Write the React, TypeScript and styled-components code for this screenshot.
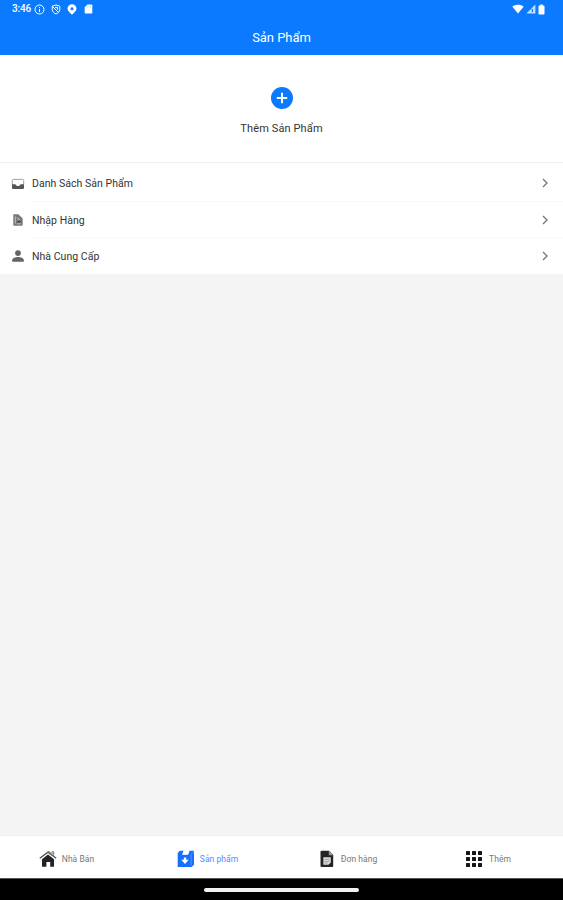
import React from "react";
import styled, { createGlobalStyle } from "styled-components";

const GlobalStyle = createGlobalStyle`
  * { box-sizing: border-box; }
  body { margin: 0; font-family: Roboto, "Noto Sans", sans-serif; background: #f4f4f4; }
  svg { display: block; flex: none; }
`;

const Screen = styled.div`
  height: 900px;
  width: 100%;
  display: flex;
  flex-direction: column;
  overflow: hidden;
  background: #f4f4f4;
`;

const Header = styled.header`
  height: 55px;
  background: #0b7aff;
  color: #fff;
`;

const StatusBar = styled.div`
  height: 18px;
  padding: 0 18px 0 12px;
  display: flex;
  align-items: center;
  justify-content: space-between;
`;

const StatusGroup = styled.div<{ $gap: number }>`
  display: flex;
  align-items: center;
  gap: ${(p) => p.$gap}px;
`;

const Clock = styled.span`
  width: 16px;
  font-size: 10px;
  font-weight: 500;
  line-height: 18px;
  letter-spacing: -0.15px;
  white-space: nowrap;
`;

const Title = styled.h1`
  margin: 0;
  height: 37px;
  line-height: 39px;
  text-align: center;
  font-size: 13px;
  font-weight: 400;
  letter-spacing: -0.05px;
`;

const AddPanel = styled.button`
  height: 107px;
  padding: 32px 0 0;
  border: 0;
  background: #fff;
  display: flex;
  flex-direction: column;
  align-items: center;
  gap: 12px;
  font: 400 11px/16px Roboto, sans-serif;
  letter-spacing: 0.12px;
  color: #333;
`;

const Menu = styled.nav`
  height: 112px;
  padding-top: 2px;
  border-top: 1px solid #efefef;
  background: #fff;
  display: grid;
  grid-template-rows: 37px 36px 36px;
`;

const MenuRow = styled.a`
  display: flex;
  align-items: center;
  padding-left: 11px;
  color: #666;
`;

const MenuBody = styled.span<{ $last?: boolean }>`
  flex: 1;
  align-self: stretch;
  margin-left: 7px;
  padding-right: 12px;
  border-bottom: 1px solid ${(p) => (p.$last ? "transparent" : "#f9f9f9")};
  display: flex;
  align-items: center;
  justify-content: space-between;
`;

const MenuLabel = styled.span`
  padding-top: 1px;
  font-size: 10.5px;
  letter-spacing: 0.04px;
  color: #333;
`;

const Content = styled.main`
  flex: 1;
`;

const TabBar = styled.nav`
  height: 43px;
  padding: 3px 2px 0 0;
  border-top: 1px solid #eee;
  background: #fff;
  display: grid;
  grid-template-columns: 133px 149px 133px 1fr;
`;

const Tab = styled.a<{ $active?: boolean; $gap: number }>`
  display: flex;
  align-items: center;
  justify-content: center;
  gap: ${(p) => p.$gap}px;
  color: ${(p) => (p.$active ? "#176fff" : "#222")};
`;

const TabLabel = styled.span<{ $active?: boolean }>`
  font-size: 8.5px;
  line-height: 12px;
  white-space: nowrap;
  letter-spacing: 0.05px;
  color: ${(p) => (p.$active ? "#4e8dff" : "#777")};
`;

const SystemBar = styled.footer`
  height: 22px;
  background: #000;
  border-top: 1px solid #555;
  display: flex;
  align-items: center;
  justify-content: center;
`;

const HomeHandle = styled.span`
  width: 155px;
  height: 4px;
  border-radius: 2px;
  background: #f2f2f2;
`;

const InfoIcon = () => (
  <svg width="11" height="11" viewBox="0 0 11 11" fill="none" stroke="#fff">
    <circle cx="5.5" cy="5.5" r="4.5" />
    <path d="M5.5 3v1M5.5 5v3.2" />
  </svg>
);
const ShieldIcon = () => (
  <svg width="10" height="11" viewBox="0 0 10 11" fill="none" stroke="#fff">
    <path d="M1.2 2.2 5 .9l3.8 1.3v3C8.8 7.6 7 9.2 5 10 3 9.2 1.2 7.6 1.2 5.2zM1.5 2.5l6 6M4 3.3h2.5v2.4" />
  </svg>
);
const PinIcon = () => (
  <svg width="10" height="11" viewBox="0 0 10 11" fill="#fff" fillRule="evenodd">
    <path d="M5 .2A4.5 4.5 0 0 0 .5 4.6C.5 7.1 3 8.7 5 10.8c2-2.1 4.5-3.7 4.5-6.2A4.5 4.5 0 0 0 5 .2zm0 3a1.5 1.5 0 1 1 0 3 1.5 1.5 0 0 1 0-3z" />
  </svg>
);
const CardIcon = () => (
  <svg width="10" height="10" viewBox="-1 0 10 10">
    <path d="M3.5.5h4a.8.8 0 0 1 .8.8v7.4a.8.8 0 0 1-.8.8h-6a.8.8 0 0 1-.8-.8V3.3z" fill="#fff" />
    <path d="M3.5 2v1.4M5 2v1.4M6.5 2v1.4" stroke="#9bc7ff" strokeWidth=".6" />
  </svg>
);
const WifiIcon = () => (
  <svg width="12" height="10" viewBox="0 0 12 10">
    <path d="M.4 2.7C3.4.1 8.6.1 11.6 2.7L6 9.5z" fill="#fff" />
  </svg>
);
const SignalIcon = () => (
  <svg width="10" height="10" viewBox="0 0 10 10">
    <path d="M9.4.6v9H.4z" fill="#fff" fillOpacity=".75" />
    <path d="M6.4 5v3" stroke="#0b7aff" strokeWidth="1.2" />
  </svg>
);
const BatteryIcon = () => (
  <svg width="7" height="11" viewBox="0 0 7 11" fill="#fff">
    <path d="M2.2.5h2.6v1h.7a1 1 0 0 1 1 1v7a1 1 0 0 1-1 1h-4a1 1 0 0 1-1-1v-7a1 1 0 0 1 1-1h.7z" />
  </svg>
);
const AddIcon = () => (
  <svg width="22" height="22" viewBox="0 0 22 22">
    <circle cx="11" cy="11" r="11" fill="#0b7aff" />
    <path d="M11 5.8v10.4M5.8 11h10.4" stroke="#fff" strokeWidth="2" />
  </svg>
);
const TrayIcon = () => (
  <svg width="14" height="14" viewBox="0 0 14 14">
    <path d="M1.3 8V3.4q0-1 1-1h9.4q1 0 1 1V8" fill="none" stroke="#a3a3a3" />
    <path d="M1 7.2h3.5c.4 2.4 4.6 2.4 5 0H13v3.9a1 1 0 0 1-1 1H2a1 1 0 0 1-1-1z" fill="#555" />
  </svg>
);
const ReceiptIcon = () => (
  <svg width="14" height="14" viewBox="0 0 14 14">
    <path d="M2.3 1.3h5l4.4 4.3v6.1a1 1 0 0 1-1 1H3.3a1 1 0 0 1-1-1z" fill="#777" />
    <path d="M4.3 3.6v7M5.8 4.2l3.4 2.9M6 7h1.5M5.8 10.8h4" fill="none" stroke="#d4d4d4" strokeWidth=".8" />
    <path d="M6 7.7h3.8v1.9H6z" fill="#505050" />
  </svg>
);
const PersonIcon = () => (
  <svg width="14" height="14" viewBox="0 0 14 14" fill="#646464">
    <circle cx="7" cy="4.1" r="2.9" />
    <path d="M1.2 12.7v-1.5C1.2 9.2 4.5 8 7 8s5.8 1.2 5.8 3.2v1.5z" />
  </svg>
);
const ChevronIcon = () => (
  <svg width="12" height="12" viewBox="0 0 12 12">
    <path d="m4 2 4 4-4 4" fill="none" stroke="#777" strokeWidth="1.35" />
  </svg>
);
const HouseIcon = () => (
  <svg width="18" height="18" viewBox="0 0 18 18">
    <path d="M3 9.2 9 4.6l6 4.6v7.6h-3.8v-4.7H7.4v4.7H3z" fill="#222" />
    <path d="M.8 8.3 9 2.2l8.2 6.1" fill="none" stroke="#555" strokeWidth="1.4" />
    <path d="M8.2 2.8 10 1.4l1.5 1.1M13 4.4V1.8h1.7v3.8" fill="none" stroke="#777" strokeWidth="1" />
  </svg>
);
const ProductIcon = () => (
  <svg width="18" height="18" viewBox="0 0 18 18">
    <path d="M.7 3.1 2.8.8H7L5.2 4.8h6L12.6.8h3.9l.5.8v13.1L14.7 17H.7z" fill="#176fff" />
    <path d="M6.6.8h4.5L10 4.3H5.3z" fill="#fff" />
    <path d="M14.1 4.6v10.8M14.1 4.4 16.7 2" fill="none" stroke="#78a9ff" strokeWidth=".7" />
    <path d="M6.8 7.4h2.4v2.4h2.5L8 13.9 4.3 9.8h2.5z" fill="#fff" />
  </svg>
);
const OrderIcon = () => (
  <svg width="14" height="18" viewBox="0 0 14 18">
    <path d="M1.5.7h7.4l4.3 4.4v10.8a1 1 0 0 1-1 1H1.5a1 1 0 0 1-1-1V1.7a1 1 0 0 1 1-1z" fill="#242424" />
    <path d="M8.8.7v4.5h4.4z" fill="#999" />
    <path d="M3.4 7.3h7.4v5.2l-2.4 2.3h-5z" fill="#dedede" />
    <path d="M4.6 9.3h5M4.6 11.3h5M4.6 13h3" stroke="#777" strokeWidth=".6" />
  </svg>
);
const GridIcon = () => (
  <svg width="18" height="18" viewBox="0 0 18 18" fill="#171717">
    {[1, 7, 13].map((y) =>
      [1, 7, 13].map((x) => <rect key={`${x}-${y}`} x={x} y={y} width="4" height="4" rx=".5" />)
    )}
  </svg>
);

const menuItems = [
  { label: "Danh Sách Sản Phẩm", Icon: TrayIcon },
  { label: "Nhập Hàng", Icon: ReceiptIcon },
  { label: "Nhà Cung Cấp", Icon: PersonIcon },
];

const tabs = [
  { label: "Nhà Bán", Icon: HouseIcon, gap: 5 },
  { label: "Sản phẩm", Icon: ProductIcon, gap: 5, active: true },
  { label: "Đơn hàng", Icon: OrderIcon, gap: 7 },
  { label: "Thêm", Icon: GridIcon, gap: 6 },
];

export default function App() {
  return (
    <>
      <GlobalStyle />
      <Screen>
        <Header>
          <StatusBar>
            <StatusGroup $gap={6}>
              <Clock>3:46</Clock>
              <InfoIcon />
              <ShieldIcon />
              <PinIcon />
              <CardIcon />
            </StatusGroup>
            <StatusGroup $gap={2}>
              <WifiIcon />
              <SignalIcon />
              <BatteryIcon />
            </StatusGroup>
          </StatusBar>
          <Title>Sản Phẩm</Title>
        </Header>
        <AddPanel>
          <AddIcon />
          Thêm Sản Phẩm
        </AddPanel>
        <Menu>
          {menuItems.map(({ label, Icon }, i) => (
            <MenuRow key={label}>
              <Icon />
              <MenuBody $last={i === menuItems.length - 1}>
                <MenuLabel>{label}</MenuLabel>
                <ChevronIcon />
              </MenuBody>
            </MenuRow>
          ))}
        </Menu>
        <Content />
        <TabBar>
          {tabs.map(({ label, Icon, gap, active }) => (
            <Tab key={label} $active={active} $gap={gap}>
              <Icon />
              <TabLabel $active={active}>{label}</TabLabel>
            </Tab>
          ))}
        </TabBar>
        <SystemBar>
          <HomeHandle />
        </SystemBar>
      </Screen>
    </>
  );
}
